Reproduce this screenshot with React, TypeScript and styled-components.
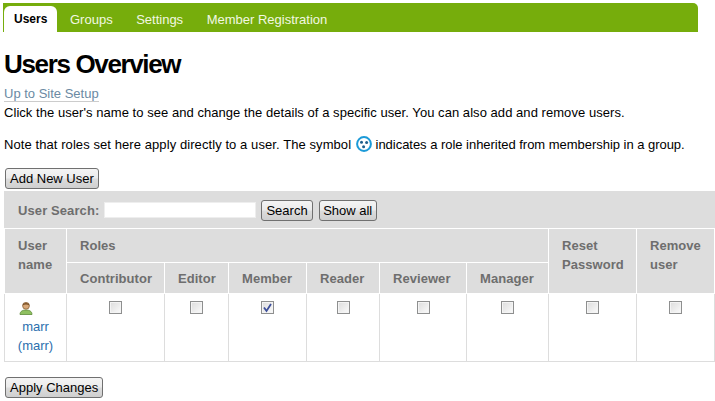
import React from 'react';
import styled, { createGlobalStyle } from 'styled-components';

const GlobalStyle = createGlobalStyle`
  html, body {
    margin: 0;
    padding: 0;
    background: #fff;
    color: #000;
    font-family: "Liberation Sans", Arial, sans-serif;
    font-size: 13px;
  }
`;

const ROLES = ['Contributor', 'Editor', 'Member', 'Reader', 'Reviewer', 'Manager'];

const App: React.FC = () => (
  <Page>
    <GlobalStyle />
    <TabBar>
      <Tab active>Users</Tab>
      <Tab>Groups</Tab>
      <Tab>Settings</Tab>
      <Tab>Member Registration</Tab>
    </TabBar>
    <Title>Users Overview</Title>
    <UpLink href="#">Up to Site Setup</UpLink>
    <Description>Click the user's name to see and change the details of a specific user. You can also add and remove users.</Description>
    <Note>
      Note that roles set here apply directly to a user. The symbol <GroupIcon /> <NoteTail>indicates a role inherited from membership in a group.</NoteTail>
    </Note>
    <AddRow><Button>Add New User</Button></AddRow>
    <Listing>
      <colgroup>
        <col width="62" />
        <col width="98" />
        <col width="64" />
        <col width="78" />
        <col width="73" />
        <col width="87" />
        <col width="82" />
        <col width="88" />
        <col width="78" />
      </colgroup>
      <thead>
        <tr>
          <SearchCell colSpan={9}>
            <SearchForm>
              <SearchLabel>User Search:</SearchLabel>
              <SearchInput type="text" />
              <Button>Search</Button>
              <ShowAllButton>Show all</ShowAllButton>
            </SearchForm>
          </SearchCell>
        </tr>
        <tr>
          <HeadCell rowSpan={2}>User name</HeadCell>
          <HeadCell colSpan={6}>Roles</HeadCell>
          <HeadCell rowSpan={2}>Reset Password</HeadCell>
          <HeadCell rowSpan={2}>Remove user</HeadCell>
        </tr>
        <tr>
          {ROLES.map(role => <RoleCell key={role}>{role}</RoleCell>)}
        </tr>
      </thead>
      <tbody>
        <tr>
          <UserCell>
            <UserIcon />
            <UserLink href="#">marr</UserLink>
            <UserLink href="#">(marr)</UserLink>
          </UserCell>
          {ROLES.map(role => (
            <BoxCell key={role}><CheckBox checked={role === 'Member'} /></BoxCell>
          ))}
          <BoxCell><CheckBox /></BoxCell>
          <BoxCell><CheckBox /></BoxCell>
        </tr>
      </tbody>
    </Listing>
    <ApplyRow><Button>Apply Changes</Button></ApplyRow>
  </Page>
);

export default App;

const CheckBox: React.FC<{ checked?: boolean }> = ({ checked }) => (
  <BoxWrap>
    <BoxInput type="checkbox" defaultChecked={checked} />
    {checked && (
      <CheckMark viewBox="0 0 13 13">
        <path d="M3 6.5 L5.5 10 L10 3" fill="none" stroke="#3d4f9a" strokeWidth="1.8" />
      </CheckMark>
    )}
  </BoxWrap>
);

const GroupIcon: React.FC = () => (
  <InlineIcon viewBox="0 0 16 16">
    <circle cx="8" cy="8" r="6.9" fill="#fff" stroke="#1b9ad8" strokeWidth="2" />
    <circle cx="5.5" cy="6.2" r="1.5" fill="#1f5f8c" />
    <circle cx="10.6" cy="6.4" r="1.5" fill="#1f5f8c" />
    <circle cx="7.6" cy="10.8" r="1.5" fill="#1f5f8c" />
  </InlineIcon>
);

const UserIcon: React.FC = () => (
  <PersonIcon viewBox="0 0 14 14">
    <path d="M1 13.5 C1 10 4 9 7 9 C10 9 13 10 13 13.5 Z" fill="#8fc060" stroke="#5d8a38" strokeWidth="0.8" />
    <circle cx="7" cy="4.8" r="3.4" fill="#d8a878" stroke="#8a6238" strokeWidth="0.8" />
    <path d="M3.6 4.4 C3.8 1.2 10.2 1.2 10.4 4.4 C8.5 3.2 5.5 3.2 3.6 4.4 Z" fill="#7a5228" />
  </PersonIcon>
);

const Page = styled.div`
  width: 715px;
  height: 401px;
  overflow: hidden;
  padding: 3px 0 0 4px;
  box-sizing: border-box;
`;

const TabBar = styled.div`
  display: flex;
  align-items: flex-end;
  width: 695px;
  height: 29px;
  margin-left: -1px;
  padding-left: 1px;
  box-sizing: border-box;
  background: #76ad0c;
  border-top-right-radius: 5px;
`;

const Tab = styled.div<{ active?: boolean }>`
  height: 26px;
  line-height: 27px;
  padding: 0 11.5px 0 ${props => props.active ? 10 : 13}px;
  margin-right: -1px;
  font-size: 13px;
  color: #f2f8e2;
  ${props => props.active && `
    width: 53px;
    box-sizing: border-box;
    margin-right: 0;
    padding-right: 0;
    background: #fff;
    color: #000;
    font-weight: bold;
    font-size: 12px;
    border-radius: 6px 6px 0 0;
  `}
`;

const Title = styled.h1`
  margin: 16px 0 0;
  height: 32px;
  font-size: 26px;
  line-height: 32px;
  font-weight: bold;
  letter-spacing: -1.35px;
`;

const UpLink = styled.a`
  display: inline-block;
  margin-top: 6px;
  height: 15px;
  line-height: 15px;
  color: #6b8aa3;
  text-decoration: none;
  border-bottom: 1px solid #ccc;
`;

const Description = styled.p`
  margin: 2px 0 0;
  line-height: 17px;
  letter-spacing: 0.05px;
`;

const Note = styled.p`
  margin: 15px 0 0;
  line-height: 17px;
  letter-spacing: 0.08px;
`;

const NoteTail = styled.span`
  letter-spacing: -0.03px;
`;

const InlineIcon = styled.svg`
  width: 16px;
  height: 16px;
  margin-left: 1px;
  vertical-align: -3px;
`;

const AddRow = styled.div`
  margin-top: 15px;
  padding-left: 1px;
  height: 23px;
`;

const Button = styled.button`
  height: 21px;
  padding: 0 4px;
  font-family: "Liberation Sans", Arial, sans-serif;
  font-size: 13px;
  color: #000;
  border: 1px solid #707070;
  border-radius: 3px;
  background: linear-gradient(#f4f4f4 0%, #ebebeb 48%, #dcdcdc 52%, #cfcfcf 100%);
`;

const ShowAllButton = styled(Button)`
  margin-left: 1px;
  padding: 0 3.5px;
`;

const Listing = styled.table`
  width: 711px;
  table-layout: fixed;
  border-collapse: collapse;
`;

const SearchCell = styled.th`
  height: 36px;
  padding: 0;
  background: #ddd;
  border: 1px solid #ddd;
  border-bottom: 1px solid #fff;
`;

const SearchForm = styled.div`
  display: flex;
  align-items: center;
  gap: 5px;
  padding-left: 13px;
`;

const SearchLabel = styled.span`
  color: #6e6e6e;
  font-weight: bold;
  letter-spacing: 0.1px;
`;

const SearchInput = styled.input`
  width: 152px;
  height: 16px;
  padding: 0;
  box-sizing: border-box;
  border: 1px solid #eee;
  background: #fff;
`;

const HeadCell = styled.th`
  padding: 7px 13px;
  height: 18px;
  text-align: left;
  vertical-align: top;
  line-height: 19px;
  font-weight: bold;
  letter-spacing: 0.05px;
  color: #6e6e6e;
  background: #ddd;
  border: 1px solid #fff;
`;

const RoleCell = styled(HeadCell)`
  height: 30px;
  padding: 0 13px;
  vertical-align: middle;
`;

const UserCell = styled.td`
  height: 62px;
  padding: 5px 0 0;
  text-align: center;
  vertical-align: top;
  border: 1px solid #ddd;
`;

const PersonIcon = styled.svg`
  display: block;
  width: 14px;
  height: 14px;
  margin: 2px auto 2px 14px;
`;

const UserLink = styled.a`
  display: block;
  line-height: 19px;
  color: #2c6fae;
  text-decoration: none;
`;

const BoxCell = styled.td`
  padding: 7px 0 0;
  text-align: center;
  vertical-align: top;
  border: 1px solid #ddd;
`;

const BoxWrap = styled.span`
  position: relative;
  display: inline-block;
  width: 13px;
  height: 13px;
`;

const BoxInput = styled.input`
  appearance: none;
  display: block;
  width: 13px;
  height: 13px;
  margin: 0;
  border: 1px solid #8e8f8f;
  background: linear-gradient(135deg, #dcdcdc, #fbfbfb);
  box-shadow: inset 0 0 0 1px #f4f4f4;
`;

const CheckMark = styled.svg`
  position: absolute;
  left: 0;
  top: 0;
  width: 13px;
  height: 13px;
`;

const ApplyRow = styled.div`
  margin-top: 15px;
  padding-left: 1px;
`;
